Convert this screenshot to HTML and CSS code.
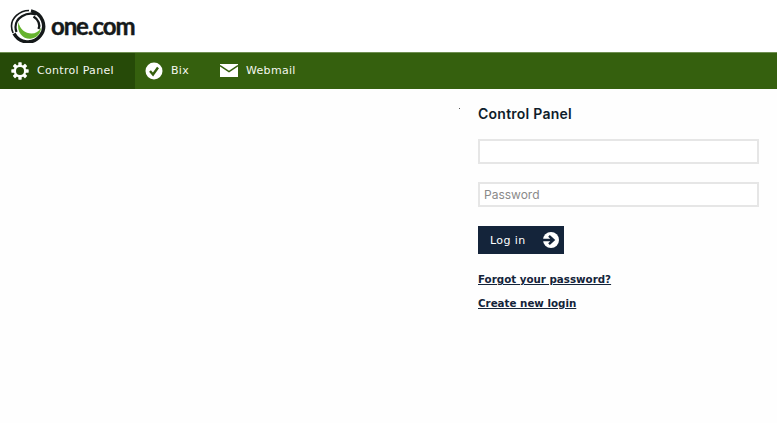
FILE: index.html
```html
<!DOCTYPE html>
<html lang="en">
<head>
  <meta charset="UTF-8" />
  <title>one.com - Control Panel</title>
  <link rel="stylesheet" href="styles.css">
</head>
<body>
  <!-- LOGO -->
  <header class="top">
    <div class="logo">
      <svg class="logo-mark" width="37" height="34" viewBox="0 0 37 34">
        <path d="M21 1.800A15.700 15.700 0 1 1 4 24.500" fill="none" stroke="#15191a" stroke-width="3.400"/>
        <path d="M19 1.500C9 1.700 1.500 9 1.500 17c0 3 .6 5 1.600 7" fill="none" stroke="#15191a" stroke-width="1.600"/>
        <path d="M26 5.500C16 2.500 5.500 9 5.500 18c0 2 .4 3.500 1 5" fill="none" stroke="#15191a" stroke-width="2.200"/>
        <path d="M23.500 7.500C28.500 10.500 30.500 16 28.500 20" fill="none" stroke="#15191a" stroke-width="2.400"/>
        <path d="M8.500 13C6 24 14 30.500 20.500 29.800c6.500-.7 10.500-5.500 10.500-11.300-2 4-5.500 6-9.500 6-6 0-12-4.500-13-11.500z" fill="#66b32e"/>
      </svg>
      <span class="logo-text">one.com</span>
    </div>
  </header>

  <!-- NAV -->
  <nav class="nav">
    <a class="nav-item active" href="#">
      <svg class="nav-icon" width="18" height="18" viewBox="0 0 18 18">
        <g fill="#fff">
          <rect x="7.300" y="0.300" width="3.400" height="17.400" rx="0.6"/>
          <rect x="7.300" y="0.300" width="3.400" height="17.400" rx="0.6" transform="rotate(45 9 9)"/>
          <rect x="7.300" y="0.300" width="3.400" height="17.400" rx="0.6" transform="rotate(90 9 9)"/>
          <rect x="7.300" y="0.300" width="3.400" height="17.400" rx="0.6" transform="rotate(135 9 9)"/>
          <circle cx="9" cy="9" r="6.300"/>
        </g>
        <circle cx="9" cy="9" r="4" fill="#264a08"/>
      </svg>
      Control Panel
    </a>
    <a class="nav-item" href="#">
      <svg class="nav-icon" width="18" height="18" viewBox="0 0 18 18">
        <circle cx="9" cy="9" r="8.500" fill="#fff"/>
        <path d="M5 9l3 3.500 5-7" fill="none" stroke="#35600e" stroke-width="2.400"/>
      </svg>
      Bix
    </a>
    <a class="nav-item" href="#">
      <svg class="nav-icon" width="18" height="13" viewBox="0 0 18 13">
        <rect width="18" height="13" fill="#fff"/>
        <path d="M0 1.500l9 6 9-6" fill="none" stroke="#35600e" stroke-width="1.500"/>
      </svg>
      Webmail
    </a>
  </nav>

  <!-- LOGIN -->
  <main class="content">
    <span class="speck"></span>
    <form class="login">
      <h1>Control Panel</h1>
      <input class="field" type="text" />
      <input class="field" type="text" placeholder="Password" />
      <button class="login-btn" type="button">
        Log in
        <svg width="16" height="16" viewBox="0 0 16 16">
          <circle cx="8" cy="8" r="8" fill="#fff"/>
          <path d="M0 8h9.500M6 3.800L10.500 8 6 12.200" fill="none" stroke="#14243a" stroke-width="2.400"/>
        </svg>
      </button>
      <a class="link" href="#">Forgot your password?</a>
      <a class="link" href="#">Create new login</a>
    </form>
  </main>
</body>
</html>
```

FILE: styles.css
```css
html,
body {
  height: 100%;
}

body {
  margin: 0;
  background: #fefefe;
  font-family: "DejaVu Sans", sans-serif;
  color: #14243a;
}

.top {
  height: 52px;
  background: #ffffff;
}

.logo {
  display: flex;
  align-items: center;
  gap: 4px;
  height: 52px;
  padding: 0 0 1px 10px;
  box-sizing: border-box;
}

.logo-text {
  font-family: "Lato", sans-serif;
  font-size: 24px;
  font-weight: 700;
  letter-spacing: -1.1px;
  -webkit-text-stroke: 0.4px #15191a;
  color: #15191a;
}

.nav {
  display: flex;
  box-sizing: border-box;
  height: 37px;
  background: #35600e;
  border-top: 1px solid #6f8f52;
}

.nav-item {
  display: flex;
  align-items: center;
  gap: 8px;
  padding: 0 21px 1px 10px;
  font-size: 11px;
  letter-spacing: 0.3px;
  white-space: nowrap;
  color: #f4f7ef;
  text-decoration: none;
}

.nav-item.active {
  width: 135px;
  box-sizing: border-box;
  padding-left: 11px;
  background: #264a08;
}

.content {
  position: relative;
  display: flex;
  justify-content: flex-end;
  padding-right: 18px;
}

/* stray dot left of the form */
.speck {
  position: absolute;
  left: 459px;
  top: 19px;
  width: 1px;
  height: 1px;
  background: #555555;
}

.login {
  display: flex;
  flex-direction: column;
  align-items: flex-start;
  width: 281px;
}

.login h1 {
  margin: 16px 0 16px;
  font-family: "Inter", sans-serif;
  font-size: 14px;
  line-height: 18px;
  font-weight: 600;
  letter-spacing: 0.25px;
  color: #0f1d2b;
}

.field {
  box-sizing: border-box;
  width: 100%;
  height: 25px;
  margin-bottom: 18px;
  padding: 0 4px;
  background: #ffffff;
  border: 2px solid #e6e6e6;
  border-radius: 0;
  font-family: "Inter", sans-serif;
  font-size: 12px;
}

.field::placeholder {
  color: #8a8a8a;
}

.login-btn {
  display: flex;
  align-items: center;
  justify-content: space-between;
  box-sizing: border-box;
  width: 86px;
  height: 28px;
  margin: 1px 0 18px;
  padding: 0 5px 0 12px;
  background: #14243a;
  border: none;
  color: #ffffff;
  font-family: "DejaVu Sans", sans-serif;
  font-size: 11px;
  letter-spacing: 0.4px;
}

.link {
  margin-bottom: 9px;
  font-size: 10.3px;
  line-height: 15px;
  font-weight: 700;
  color: #14243a;
}
```
